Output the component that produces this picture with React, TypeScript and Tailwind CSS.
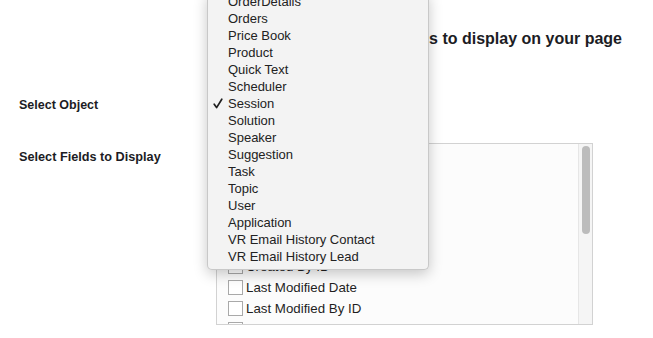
import React from "react";

const menuItems = [
  "OrderDetails",
  "Orders",
  "Price Book",
  "Product",
  "Quick Text",
  "Scheduler",
  "Session",
  "Solution",
  "Speaker",
  "Suggestion",
  "Task",
  "Topic",
  "User",
  "Application",
  "VR Email History Contact",
  "VR Email History Lead",
];

const fields = [
  "Name",
  "Owner ID",
  "Record Type ID",
  "Created Date",
  "Is Deleted",
  "Created By ID",
  "Last Modified Date",
  "Last Modified By ID",
  "System Modstamp",
  "Description",
];

function Check() {
  return (
    <svg width="10" height="11" viewBox="0 0 10 11" className="absolute left-[5px] top-[3px]">
      <path d="M1.2 6.2 L3.6 9.6 L8.8 1.2" fill="none" stroke="#1f1f1f" strokeWidth="1.7" strokeLinecap="round" strokeLinejoin="round" />
    </svg>
  );
}

export default function App() {
  return (
    <div className="relative h-[338px] w-[653px] overflow-hidden bg-white font-['Liberation_Sans',Arial,sans-serif] text-[#1c1c24]">
      <div className="pt-[29px] pr-[31px] text-right text-[16px] font-bold leading-5">
        Select an object and the fields to display on your page
      </div>

      <div className="mt-[46px] flex h-[20px] items-center pl-[19px]">
        <div className="w-[197px] text-[12.5px] font-bold">Select Object</div>
      </div>

      <div className="mt-[28px] flex items-start pl-[19px]">
        <div className="w-[197px] pt-[5px] text-[12.7px] font-bold">Select Fields to Display</div>
        <div className="flex h-[182px] w-[377px] border border-[#d2d2d2] bg-[#fcfcfc]">
          <div className="flex-1 overflow-hidden pl-[11px] pt-[7px]">
            {fields.map((f) => (
              <div key={f} className="flex h-[21px] items-center gap-[3px] text-[13.3px] leading-[15px] text-[#1f1f1f]">
                <span className="h-[15px] w-[15px] border border-[#a9a9a9] bg-white" />
                <span>{f}</span>
              </div>
            ))}
          </div>
          <div className="flex w-[14px] justify-center border-l border-[#e6e6e6] bg-[#f5f5f5] pt-[2px]">
            <div className="h-[88px] w-[8px] rounded-full bg-[#bcbcbc]" />
          </div>
        </div>
      </div>

      <div className="absolute left-[207px] top-[-7px] w-[222px] rounded-b-[5px] border border-t-0 border-[#c8c8c8] bg-[#f3f3f3] pb-[4px] shadow-[0_4px_14px_rgba(0,0,0,0.22)]">
        {menuItems.map((m) => (
          <div key={m} className="relative h-[17px] pl-[20px] text-[13px] leading-[17px] text-[#222]">
            {m === "Session" && <Check />}
            {m}
          </div>
        ))}
      </div>
    </div>
  );
}
